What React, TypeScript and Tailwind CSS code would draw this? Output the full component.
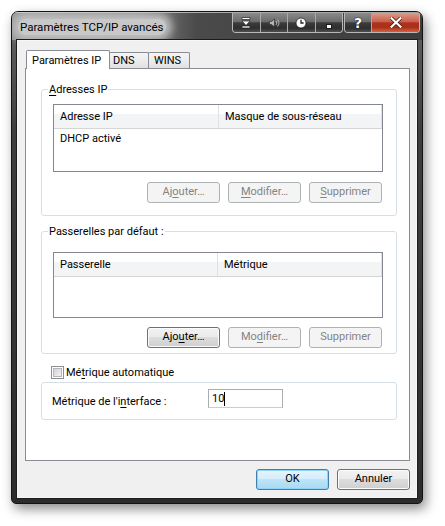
import React from "react";

function U({ children }: { children: React.ReactNode }) {
  return <span className="underline decoration-1 underline-offset-[2px]">{children}</span>;
}

function WinButton({
  children,
  kind = "normal",
}: {
  children: React.ReactNode;
  kind?: "normal" | "disabled" | "default";
}) {
  if (kind === "disabled")
    return (
      <div className="w-[73px] h-[21px] rounded-[3px] border border-[#adb2b5] bg-[#f4f4f4] text-[#838383] flex items-center justify-center pb-[1px]">
        {children}
      </div>
    );
  if (kind === "default")
    return (
      <div className="w-[73px] h-[21px] rounded-[3px] border border-[#3c7fb1] bg-[linear-gradient(180deg,#e6f5fd_0%,#d4eefb_45%,#bde4f8_50%,#a9d9f2_100%)] shadow-[inset_0_0_0_1px_#8fd3f9] flex items-center justify-center pb-[1px]">
        {children}
      </div>
    );
  return (
    <div className="w-[73px] h-[21px] rounded-[3px] border border-[#707070] bg-[linear-gradient(180deg,#f2f2f2_0%,#ebebeb_45%,#dddddd_50%,#cfcfcf_100%)] shadow-[inset_0_0_0_1px_#fcfcfc] flex items-center justify-center pb-[1px]">
      {children}
    </div>
  );
}

function ListView({
  col1,
  col2,
  col1w,
  h,
  row,
}: {
  col1: string;
  col2: string;
  col1w: string;
  h: string;
  row?: string;
}) {
  return (
    <div className={"ml-[11px] w-[330px] border border-[#828790] bg-white " + h}>
      <div className="flex h-[24px] border-b border-[#d5d5d5] bg-[linear-gradient(180deg,#ffffff_0%,#ffffff_40%,#f3f4f6_40%,#f3f4f6_100%)]">
        <div className={"border-r border-[#dfe1e5] pl-[6px] pt-[1px] flex items-center " + col1w}>{col1}</div>
        <div className="flex-1 border-r border-[#dfe1e5] pl-[6px] pt-[1px] flex items-center">{col2}</div>
      </div>
      {row ? <div className="pl-[6px] pt-[2px] leading-[16px]">{row}</div> : null}
    </div>
  );
}

function CapCell({ children, last = false }: { children: React.ReactNode; last?: boolean }) {
  return (
    <div
      className={
        "flex-1 flex items-center justify-center bg-[linear-gradient(180deg,#8a8a8a_0%,#6c6c6c_45%,#3c3c3c_52%,#2e2e2e_80%,#505050_100%)] " +
        (last ? "" : "border-r border-[#a9a9a9]")
      }
    >
      {children}
    </div>
  );
}

export default function App() {
  return (
    <div className="w-[445px] h-[526px] bg-white pl-[11px] pt-[11px] font-['Roboto',sans-serif] text-[11px] leading-[16px] text-black">
      <div className="w-[412px] h-[493px] rounded-t-[7px] rounded-b-[5px] border border-[#141414] bg-[linear-gradient(180deg,#8e8e8e_0px,#5c5c5c_28px,#3e3e3e_120px,#2c2c2c_100%)] shadow-[3px_5px_12px_rgba(0,0,0,0.45)] flex flex-col overflow-hidden">
        {/* Title bar */}
        <div className="h-[28px] flex items-start bg-[linear-gradient(90deg,#959595_0%,#868686_30%,#4a4a4a_45%,#3c3c3c_100%)] shadow-[inset_0_1px_0_rgba(255,255,255,0.55)]">
          <div className="ml-[6px] mt-[7px] px-[2px] rounded-[8px] bg-[#c8c8c8] shadow-[0_0_8px_6px_#c0c0c0] whitespace-nowrap text-[11.5px]">
            Paramètres TCP/IP avancés
          </div>
          <div className="flex-1" />
          <div className="flex mr-[2px] mt-[1px] h-[20px]">
            <div className="w-[111px] h-[20px] flex rounded-b-[4px] overflow-hidden border border-t-0 border-[#b8b8b8]">
              <CapCell>
                <svg width="10" height="13" viewBox="0 0 10 13">
                  <path d="M1 1.5h8v2H1z" fill="#fff" stroke="#1c1c1c" strokeWidth="0.7" />
                  <path d="M1 5h8l-4 4.5z" fill="#fff" stroke="#1c1c1c" strokeWidth="0.7" />
                  <path d="M1 10h8v2H1z" fill="#fff" stroke="#1c1c1c" strokeWidth="0.7" />
                </svg>
              </CapCell>
              <CapCell>
                <svg width="12" height="12" viewBox="0 0 12 12">
                  <path d="M1.5 4.5h2l3-2.5v8l-3-2.5h-2z" fill="#b5b5b5" stroke="#222" strokeWidth="0.6" />
                  <path d="M8 4a3 3 0 0 1 0 4M9.5 2.5a5 5 0 0 1 0 7" fill="none" stroke="#b5b5b5" strokeWidth="1" />
                </svg>
              </CapCell>
              <CapCell>
                <svg width="12" height="12" viewBox="0 0 12 12">
                  <circle cx="6" cy="6" r="5" fill="#fff" stroke="#222" strokeWidth="0.8" />
                  <path d="M6 2.8V6h2.6" fill="none" stroke="#222" strokeWidth="1.3" />
                </svg>
              </CapCell>
              <CapCell last>
                <div className="mt-[7px] w-[6px] h-[5px] bg-white border border-[#1c1c1c]" />
              </CapCell>
            </div>
            <div className="ml-[1px] w-[76px] h-[20px] flex rounded-b-[4px] overflow-hidden border border-t-0 border-[#b8b8b8]">
              <div className="w-[27px] flex items-center justify-center border-r border-[#a9a9a9] bg-[linear-gradient(180deg,#8a8a8a_0%,#6c6c6c_45%,#3c3c3c_52%,#2e2e2e_80%,#505050_100%)]">
                <span className="font-['DejaVu_Sans',sans-serif] font-bold text-[14px] leading-[14px] text-white [text-shadow:0_0_1px_#000,0_0_1px_#000]">
                  ?
                </span>
              </div>
              <div className="flex-1 flex items-center justify-center bg-[linear-gradient(180deg,#dc9a8a_0%,#c8624c_45%,#b2321c_52%,#a8301a_75%,#d8603e_100%)]">
                <svg width="12" height="11" viewBox="0 0 12 11">
                  <path d="M1.5 1.2L10.5 9.8M10.5 1.2L1.5 9.8" stroke="#3a1a14" strokeWidth="3.6" strokeLinecap="square" />
                  <path d="M1.5 1.2L10.5 9.8M10.5 1.2L1.5 9.8" stroke="#fff" strokeWidth="2.2" strokeLinecap="square" />
                </svg>
              </div>
            </div>
          </div>
        </div>

        {/* Body */}
        <div className="flex-1 flex px-[5px] pb-[5px]">
          <div className="w-[400px] h-[458px] bg-[#f0f0f0] border border-[#f7f7f7] shadow-[0_0_0_1px_#1c1c1c] flex flex-col pt-[9px] pl-[7px] pr-[6px]">
            {/* Tabs */}
            <div className="flex items-end h-[18px] relative z-10">
              <div className="ml-[1px] w-[84px] h-[19px] mb-[-1px] border border-b-0 border-[#898c95] rounded-t-[2px] bg-white flex items-center pl-[5px] pt-[1px] relative z-10">
                Paramètres IP
              </div>
              <div className="ml-[-1px] w-[40px] h-[16px] border border-b-0 border-[#898c95] rounded-t-[2px] bg-[linear-gradient(180deg,#f4f4f4_0%,#ececec_50%,#e0e0e0_100%)] flex items-center pl-[3px] pt-[1px]">
                DNS
              </div>
              <div className="ml-[-1px] w-[42px] h-[16px] border border-b-0 border-[#898c95] rounded-t-[2px] bg-[linear-gradient(180deg,#f4f4f4_0%,#ececec_50%,#e0e0e0_100%)] flex items-center pl-[5px] pt-[1px]">
                WINS
              </div>
            </div>

            {/* Tab page */}
            <div className="w-[385px] h-[393px] border border-[#898c95] bg-white flex flex-col">
              {/* Group 1 */}
              <div className="mt-[20px] ml-[15px] w-[356px] h-[127px] border border-[#d5dfe5] rounded-[3px] relative flex flex-col">
                <div className="absolute left-[6px] top-[-8px] bg-white px-[1px]">
                  <U>A</U>dresses IP
                </div>
                <div className="mt-[14px]">
                  <ListView col1="Adresse IP" col2="Masque de sous-réseau" col1w="w-[165px]" h="h-[68px]" row="DHCP activé" />
                </div>
                <div className="mt-[10px] ml-[11px] w-[330px] pr-[1px] flex justify-end gap-[8px]">
                  <WinButton kind="disabled">
                    Aj<U>o</U>uter…
                  </WinButton>
                  <WinButton kind="disabled">
                    <U>M</U>odifier…
                  </WinButton>
                  <WinButton kind="disabled">
                    <U>S</U>upprimer
                  </WinButton>
                </div>
              </div>

              {/* Group 2 */}
              <div className="mt-[15px] ml-[15px] w-[356px] h-[123px] border border-[#d5dfe5] rounded-[3px] relative flex flex-col">
                <div className="absolute left-[6px] top-[-8px] bg-white px-[1px]">Passerelles par défaut :</div>
                <div className="mt-[20px]">
                  <ListView col1="Passerelle" col2="Métrique" col1w="w-[164px]" h="h-[66px]" />
                </div>
                <div className="mt-[9px] ml-[11px] w-[330px] pr-[1px] flex justify-end gap-[8px]">
                  <WinButton>
                    Ajo<U>u</U>ter…
                  </WinButton>
                  <WinButton kind="disabled">
                    Mo<U>d</U>ifier…
                  </WinButton>
                  <WinButton kind="disabled">Supprimer</WinButton>
                </div>
              </div>

              {/* Checkbox */}
              <div className="mt-[12px] ml-[25px] h-[13px] flex items-center gap-[2px]">
                <div className="w-[13px] h-[13px] border border-[#8e8f8f] bg-white p-[1px] shrink-0">
                  <div className="w-full h-full border border-[#b3b7bd] bg-[linear-gradient(135deg,#cfd2d6_0%,#e6e7e9_60%,#f4f4f4_100%)]" />
                </div>
                <div className="whitespace-nowrap pt-[1px]">
                  Mé<U>t</U>rique automatique
                </div>
              </div>

              {/* Group 3 */}
              <div className="mt-[3px] ml-[15px] w-[356px] h-[38px] border border-[#d5dfe5] rounded-[3px] flex items-start pt-[6px] pl-[10px]">
                <div className="w-[156px] mt-[5px] whitespace-nowrap">
                  Métrique de l'i<U>n</U>terface :
                </div>
                <div className="w-[75px] h-[19px] border border-[#abadb3] border-b-[#c9ced6] bg-white flex items-center pl-[3px] pt-[1px]">
                  <span>10</span>
                  <span className="w-[1px] h-[14px] bg-black" />
                </div>
              </div>
            </div>

            {/* Bottom buttons */}
            <div className="mt-[8px] flex justify-end gap-[8px]">
              <WinButton kind="default">OK</WinButton>
              <WinButton>Annuler</WinButton>
            </div>
          </div>
        </div>
      </div>
    </div>
  );
}
